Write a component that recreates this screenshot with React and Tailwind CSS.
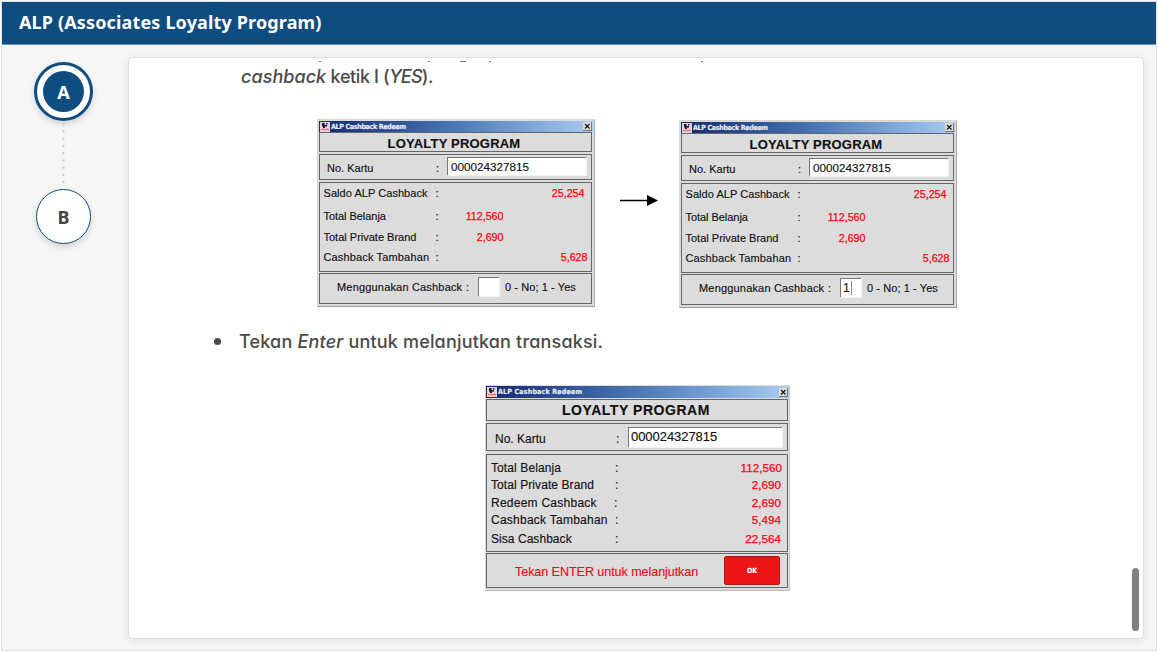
function Row({ label, value, className, labelClass, valueClass = '' }) {
  return (
    <div className={`flex items-center whitespace-pre ${className}`}>
      <span className={`shrink-0 ${labelClass}`}>{label}</span>
      <span className="shrink-0 w-3">:</span>
      <span className={`text-right text-[#ff0010] [-webkit-text-stroke:0.25px_#ff0010] ${valueClass}`}>{value}</span>
    </div>
  );
}

function TitleBar({ className }) {
  return (
    <div className={`flex items-center bg-linear-to-r from-[#16286f] via-[#4a78b6] to-[#a9cdf3] ${className}`}>
      <svg className="ml-px h-2.5 w-2.5 shrink-0" viewBox="0 0 10 10">
        <rect width="10" height="10" fill="#e9cfd8" />
        <path d="M2 1h2.500v2H7v1.500H5V6H3V4.500H2zM6 1h1.500v1.500H6z" fill="#1c1830" />
        <path d="M1 8l2-1 2 1 2-1 2 1" stroke="#d5586c" fill="none" />
      </svg>
      <span className="ml-px grow whitespace-nowrap font-['DejaVu_Sans_Condensed','DejaVu_Sans',sans-serif] text-[7px] leading-[10px] font-bold text-white/90">
        ALP Cashback Redeem
      </span>
      <svg className="mr-px h-[9px] w-[9px] shrink-0" viewBox="0 0 9 9">
        <rect width="9" height="9" fill="#5c6066" />
        <rect width="8.2" height="8.2" fill="#dedbd3" />
        <path d="M2 2l4.500 4.500M6.500 2L2 6.500" stroke="#111" strokeWidth="1.1" />
      </svg>
    </div>
  );
}

const panel = 'border border-[#66666a] bg-[#dcdcdc]';
const field = 'border-t border-l border-[#77777b] bg-white shadow-[1px_1px_0_#f4f4f4]';

function RedeemDialog({ answer, className = '' }) {
  return (
    <div className={`flex h-[188px] w-[278px] shrink-0 flex-col border border-[#d8d6d0] border-r-[#aaa] border-b-[#999] bg-[#dcdcdc] pt-px pl-px text-[11px] leading-3 text-[#111] [-webkit-text-stroke:0.15px] ${className}`}>
      <TitleBar className="h-[11px] w-[274px] tracking-[-0.3px]" />
      <div className={`${panel} flex h-5 w-[273px] items-center justify-center pt-[3px] pr-[3px] text-[13px] font-bold tracking-[0.2px]`}>
        LOYALTY PROGRAM
      </div>
      <div className={`${panel} mt-[2px] flex h-[26px] w-[273px] items-center`}>
        <span className="ml-[7px] w-[109px] pt-0.5">No. Kartu</span>
        <span className="w-[11px] pt-0.5">:</span>
        <span className={`${field} -mt-0.5 h-[18px] w-[139px] pl-[3px] text-[11.700px] leading-[18px]`}>000024327815</span>
      </div>
      <div className={`${panel} mt-[2px] h-[90px] w-[273px] pl-[3.500px]`}>
        <Row label="Saldo ALP Cashback" value="25,254" className="h-5" labelClass="w-[112px] tracking-[0.050px]" valueClass="w-[137px] text-[10.700px]" />
        <Row label="Total Belanja" value="112,560" className="h-[25px]" labelClass="w-[112px] tracking-[-0.050px]" valueClass="w-[56px] text-[10.700px]" />
        <Row label="Total Private Brand" value="2,690" className="h-[17px]" labelClass="w-[112px]" valueClass="w-[56px] text-[10.700px]" />
        <Row label="Cashback Tambahan" value="5,628" className="h-6" labelClass="w-[112px] tracking-[0.150px]" valueClass="w-[140px] text-[10.700px]" />
      </div>
      <div className={`${panel} mt-px flex h-[31px] w-[273px] items-center whitespace-pre`}>
        <span className="ml-[17px] w-[129px] pb-[3px] tracking-[0.18px]">Menggunakan Cashback</span>
        <span className="w-3 pb-[3px]">:</span>
        <span className={`${field} -mt-[5px] flex h-[19px] w-[21px] items-center pl-[2px] text-[12px]`}>
          {answer}
          {answer && <span className="ml-px h-3.5 w-px bg-[#888]" />}
        </span>
        <span className="ml-1.5 pb-[3px] tracking-[0.08px]">0 - No; 1 - Yes</span>
      </div>
    </div>
  );
}

function SummaryDialog() {
  return (
    <div className="mt-[32px] ml-[356px] flex h-[206px] w-[305px] shrink-0 flex-col border border-[#dddcd8] border-r-[#ccc] border-b-[#bbb] bg-[#dcdcdc] text-[12px] leading-3 text-[#111] [-webkit-text-stroke:0.15px]">
      <TitleBar className="h-[12px] w-[303px] tracking-[0.2px]" />
      <div className={`${panel} mt-px flex h-[22px] w-[302px] items-center justify-center text-[14px] font-bold tracking-[0.550px] pr-0.5`}>
        LOYALTY PROGRAM
      </div>
      <div className={`${panel} mt-[2px] flex h-[28px] w-[302px] items-center`}>
        <span className="ml-2 w-[121px] pt-[3px]">No. Kartu</span>
        <span className="w-[12px] pt-[3px]">:</span>
        <span className={`${field} -mt-px h-5 w-[154px] pl-0.5 text-[13px] leading-[17px] tracking-[-0.050px]`}>000024327815</span>
      </div>
      <div className={`${panel} mt-[3px] h-[98px] w-[302px] pt-1 pl-1`}>
        <Row label="Total Belanja" value="112,560" className="h-[17px]" labelClass="w-[124px] tracking-[0.1px]" valueClass="w-[155px] text-[11.700px]" />
        <Row label="Total Private Brand" value="2,690" className="h-[18px]" labelClass="w-[124px] tracking-[0.080px]" valueClass="w-[154px] text-[11.700px]" />
        <Row label="Redeem Cashback" value="2,690" className="h-[17px]" labelClass="w-[123px] tracking-[0.25px]" valueClass="w-[155px] text-[11.700px]" />
        <Row label="Cashback Tambahan" value="5,494" className="h-[18px]" labelClass="w-[124px] tracking-[0.25px]" valueClass="w-[154px] text-[11.700px]" />
        <Row label="Sisa Cashback" value="22,564" className="h-5" labelClass="w-[124px] tracking-[0.050px]" valueClass="w-[154px] text-[11.700px]" />
      </div>
      <div className={`${panel} mt-px flex h-[35px] w-[302px] items-center`}>
        <span className="ml-[28px] w-[209px] whitespace-nowrap pt-[3px] text-[12.600px] tracking-[-0.080px] text-[#f00a20]">Tekan ENTER untuk melanjutkan</span>
        <span className="flex h-[29px] w-14 items-center justify-center rounded-[2px] border border-[#b01818] bg-[#ec1515] font-['DejaVu_Sans_Condensed','DejaVu_Sans',sans-serif] text-[7px] font-bold text-white">OK</span>
      </div>
    </div>
  );
}

export default function App() {
  return (
    <div className="h-[652px] w-[1158px] overflow-hidden bg-white pt-px pl-px font-['Liberation_Sans',Arial,sans-serif]">
      <div className="flex h-[650px] w-[1156px] flex-col border border-[#dedede] bg-[#f6f6f6]">
        <header className="flex h-[43px] shrink-0 items-center border-b border-[#6b91b2] bg-[#0f4c7f] pb-0.5 pl-[17px] font-['Noto_Sans',sans-serif] text-[18px] font-bold tracking-[0.150px] whitespace-nowrap text-white">
          ALP (Associates Loyalty Program)
        </header>
        <div className="flex grow">
          <nav className="flex w-[126px] shrink-0 flex-col items-center pt-[17px] pr-[3px] font-['Noto_Sans',sans-serif] text-[18px] font-bold">
            <div className="flex h-[59px] w-[59px] items-center justify-center rounded-full border-[3px] border-[#0f4c7f] bg-white shadow-[0_3px_6px_rgba(0,0,0,0.15)]">
              <span className="flex h-[41px] w-[41px] items-center justify-center rounded-full bg-[#0f4c7f] pt-0.5 text-white">A</span>
            </div>
            <svg className="h-[68px] w-[3px]" viewBox="0 0 3 68">
              <path d="M1.500 3.200V68" stroke="#c9c9c9" strokeWidth="2.200" strokeLinecap="round" strokeDasharray="0 7.250" />
            </svg>
            <div className="flex h-[55px] w-[55px] items-center justify-center rounded-full border border-[#0f4c7f] bg-white pt-0.5 text-[#444] shadow-[0_3px_6px_rgba(0,0,0,0.15)]">B</div>
          </nav>
          <main className="mt-[12px] flex h-[582px] w-[1016px] shrink-0 rounded-[5px] border border-[#dfdfdf] bg-white shadow-[0_2px_10px_rgba(0,0,0,0.08)]">
            <div className="flex w-[1003px] flex-col overflow-hidden">
              <svg className="mt-[3px] h-px w-[620px] shrink-0" viewBox="0 0 620 1" fill="#777">
                <path d="M190 0h2v1h-2zM299 0h2v1h-2zM331 0h6v1h-6zM360 0h2v1h-2zM572 0h2v1h-2z" />
              </svg>
              <p className="mt-[3px] ml-[112px] h-6 font-['Inter',sans-serif] text-[18px] leading-6 font-medium tracking-[-0.4px] text-[#4a4a4a] [font-feature-settings:'cv11']">
                <em className="tracking-[0.050px]">cashback</em> ketik I (<em className="tracking-[-0.8px]">YES</em>).
              </p>
              <div className="mt-[30px] ml-[188px] flex h-[190px] shrink-0">
                <RedeemDialog />
                <svg className="mt-[75px] mr-[21px] ml-[25px] h-3 w-[38px] shrink-0" viewBox="0 0 38 12">
                  <path d="M0 6.500h29" stroke="#000" strokeWidth="1.500" />
                  <path d="M27 1L38 6.500L27 12z" fill="#000" />
                </svg>
                <RedeemDialog answer="1" className="mt-px" />
              </div>
              <div className="mt-[20px] ml-[85px] flex h-6 shrink-0 items-center font-['Inter',sans-serif] text-[18px] leading-6 font-medium tracking-[0.180px] text-[#4a4a4a] [font-feature-settings:'cv11']">
                <span className="mr-[18px] h-[7px] w-[7px] rounded-full bg-[#4a4a4a]" />
                <p className="whitespace-nowrap pt-px">Tekan <em>Enter</em> untuk melanjutkan transaksi.</p>
              </div>
              <SummaryDialog />
            </div>
            <div className="mt-[510px] h-[63px] w-[7px] rounded-full bg-[#808080]" />
          </main>
        </div>
      </div>
    </div>
  );
}
